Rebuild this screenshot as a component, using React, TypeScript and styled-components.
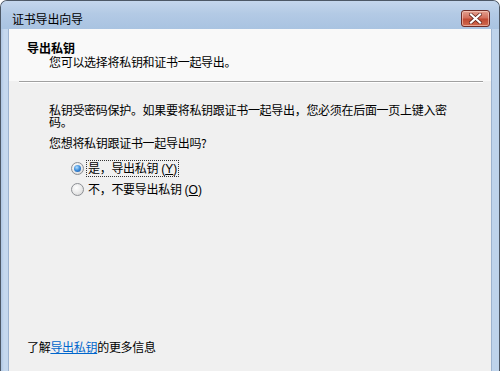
import React from "react";
import styled, { createGlobalStyle } from "styled-components";

const Global = createGlobalStyle`
  html, body { margin: 0; padding: 0; background: #ffffff; }
  body { width: 500px; height: 371px; overflow: hidden; }
  * { box-sizing: border-box; }
`;

const FONT = `"Noto Sans CJK SC", "Liberation Sans", sans-serif`;

const Window = styled.div`
  width: 500px;
  height: 371px;
  display: flex;
  flex-direction: column;
  overflow: hidden;
  border: 1px solid #4d5866;
  border-bottom: none;
  border-radius: 7px 7px 0 0;
  background: linear-gradient(90deg, #aec6e3 0px, #c5d8ee 3px, #bed3eb 100%);
  font-family: ${FONT};
  font-size: 12px;
  color: #000;
`;

const TitleBar = styled.div`
  height: 28px;
  flex: none;
  display: flex;
  justify-content: space-between;
  align-items: flex-start;
  padding: 0 9px 0 11px;
  background: linear-gradient(180deg, #c4d6ec 0%, #b3cae5 45%, #a9c3e1 100%);
`;

const Title = styled.div`
  padding-top: 11px;
  font-size: 12px;
  line-height: 14px;
  letter-spacing: -0.2px;
  color: #000;
`;

const CloseButton = styled.div`
  margin-top: 9px;
  width: 29px;
  height: 17px;
  border: 1px solid #6e2c27;
  border-radius: 3px;
  background: linear-gradient(180deg, #e3a08f 0%, #d3705d 45%, #c04a33 55%, #d06a4f 100%);
  box-shadow: inset 0 0 0 1px rgba(255, 220, 210, 0.55);
  display: flex;
  align-items: center;
  justify-content: center;
`;

const Frame = styled.div`
  flex: 1;
  display: flex;
  padding: 0 7px 0 7px;
  min-height: 0;
`;

const Client = styled.div`
  flex: 1;
  display: flex;
  flex-direction: column;
  background: #f0f0f0;
  border-left: 1px solid #9db3cf;
  border-right: 1px solid #9db3cf;
`;

const Header = styled.div`
  background: #f9f9f9;
  padding: 12px 0 12px 18px;
  flex: none;
`;

const HeaderTitle = styled.div`
  font-weight: bold;
  line-height: 14px;
`;

const HeaderSub = styled.div`
  line-height: 14px;
  padding-left: 22px;
  letter-spacing: -0.3px;
`;

const Separator = styled.div`
  height: 2px;
  margin: 0 8px 0 10px;
  border-top: 1px solid #a0a0a0;
  border-bottom: 1px solid #ffffff;
  flex: none;
`;

const Body = styled.div`
  flex: 1;
  display: flex;
  flex-direction: column;
  padding: 21px 0 18px 18px;
`;

const Paragraph = styled.div<{ $top?: number }>`
  margin-top: ${(p) => p.$top ?? 0}px;
  padding-left: 22px;
  width: 428px;
  line-height: 12px;
  letter-spacing: -0.3px;
`;

const Options = styled.div`
  margin-top: 11px;
  padding-left: 44px;
  display: flex;
  flex-direction: column;
  gap: 5px;
`;

const OptionRow = styled.div`
  display: flex;
  align-items: center;
  height: 16px;
`;

const RadioCircle = styled.span<{ $checked?: boolean }>`
  width: 13px;
  height: 13px;
  border-radius: 50%;
  border: 1px solid #8c8f94;
  background: radial-gradient(circle at 40% 35%, #ffffff 0%, #e6e6e6 60%, #d0d0d0 100%);
  display: flex;
  align-items: center;
  justify-content: center;
  flex: none;
  &::after {
    content: "";
    display: ${(p) => (p.$checked ? "block" : "none")};
    width: 7px;
    height: 7px;
    border-radius: 50%;
    background: radial-gradient(circle at 40% 35%, #b5e0ff 0%, #3a8ad8 50%, #1b4f9a 100%);
  }
`;

const OptionLabel = styled.span<{ $focused?: boolean }>`
  margin-left: 2px;
  padding: 1px 1px;
  line-height: 12px;
  border: 1px dotted ${(p) => (p.$focused ? "#333" : "transparent")};
  letter-spacing: -0.3px;
  white-space: nowrap;
`;

const AccessKey = styled.span`
  margin-left: 3px;
  font-family: "Liberation Sans", sans-serif;
  font-size: 12px;
  letter-spacing: 0;
  u { text-decoration: underline; }
`;

const Footer = styled.div`
  margin-top: auto;
  line-height: 12px;
  letter-spacing: -0.3px;
`;

const Link = styled.a`
  color: #0066cc;
  text-decoration: underline;
  cursor: pointer;
`;

export default function App() {
  return (
    <>
      <Global />
      <Window>
        <TitleBar>
          <Title>证书导出向导</Title>
          <CloseButton>
            <svg width="13" height="11" viewBox="0 0 13 11">
              <path
                d="M2 1.5 L11 9.5 M11 1.5 L2 9.5"
                stroke="#5a2018"
                strokeWidth="3.6"
                strokeLinecap="square"
              />
              <path
                d="M2 1.5 L11 9.5 M11 1.5 L2 9.5"
                stroke="#ffffff"
                strokeWidth="2.2"
                strokeLinecap="square"
              />
            </svg>
          </CloseButton>
        </TitleBar>
        <Frame>
          <Client>
            <Header>
              <HeaderTitle>导出私钥</HeaderTitle>
              <HeaderSub>您可以选择将私钥和证书一起导出。</HeaderSub>
            </Header>
            <Separator />
            <Body>
              <Paragraph>
                私钥受密码保护。如果要将私钥跟证书一起导出，您必须在后面一页上键入密码。
              </Paragraph>
              <Paragraph $top={9}>您想将私钥跟证书一起导出吗?</Paragraph>
              <Options>
                <OptionRow>
                  <RadioCircle $checked />
                  <OptionLabel $focused>
                    是，导出私钥
                    <AccessKey>
                      (<u>Y</u>)
                    </AccessKey>
                  </OptionLabel>
                </OptionRow>
                <OptionRow>
                  <RadioCircle />
                  <OptionLabel>
                    不，不要导出私钥
                    <AccessKey>
                      (<u>O</u>)
                    </AccessKey>
                  </OptionLabel>
                </OptionRow>
              </Options>
              <Footer>
                了解<Link>导出私钥</Link>的更多信息
              </Footer>
            </Body>
          </Client>
        </Frame>
      </Window>
    </>
  );
}
